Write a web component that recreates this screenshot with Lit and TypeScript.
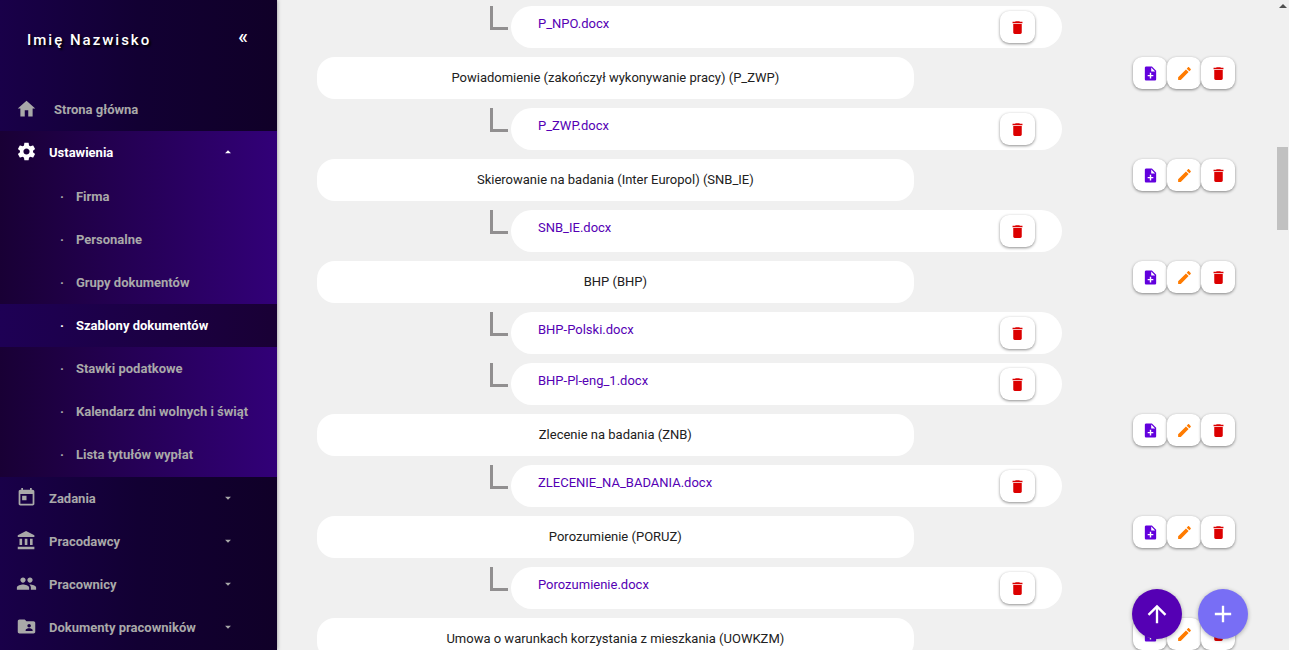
import { LitElement, html, css, svg } from "lit";
import { customElement } from "lit/decorators.js";
import { classMap } from "lit/directives/class-map.js";

const ICONS: Record<string, string> = {
  home: "M10 21v-7h4v7h5v-9h3L12 3 2 12h3v9z",
  settings:
    "M19.43 12.98c.04-.32.07-.64.07-.98s-.03-.66-.07-.98l2.11-1.65c.19-.15.24-.42.12-.64l-2-3.46c-.12-.22-.39-.3-.61-.22l-2.49 1c-.52-.4-1.08-.73-1.69-.98l-.38-2.65C14.46 2.18 14.25 2 14 2h-4c-.25 0-.46.18-.49.42l-.38 2.65c-.61.25-1.17.59-1.69.98l-2.49-1c-.23-.09-.49 0-.61.22l-2 3.46c-.13.22-.07.49.12.64l2.11 1.65c-.04.32-.07.65-.07.98s.03.66.07.98l-2.11 1.65c-.19.15-.24.42-.12.64l2 3.46c.12.22.39.3.61.22l2.49-1c.52.4 1.08.73 1.69.98l.38 2.65c.03.24.24.42.49.42h4c.25 0 .46-.18.49-.42l.38-2.65c.61-.25 1.17-.59 1.69-.98l2.49 1c.23.09.49 0 .61-.22l2-3.46c.12-.22.07-.49-.12-.64l-2.11-1.65zM12 15.5c-1.93 0-3.5-1.57-3.5-3.5s1.57-3.5 3.5-3.5 3.5 1.57 3.5 3.5-1.57 3.5-3.5 3.5z",
  today:
    "M19 3h-1V1h-2v2H8V1H6v2H5c-1.11 0-1.99.9-1.99 2L3 19c0 1.1.89 2 2 2h14c1.1 0 2-.9 2-2V5c0-1.1-.9-2-2-2zm0 16H5V8h14v11zM7 10h5v5H7z",
  bank: "M4 10v7h3v-7H4zm6 0v7h3v-7h-3zM2 22h19v-3H2v3zm14-12v7h3v-7h-3zm-4.5-9L2 6v2h19V6l-9.5-5z",
  people:
    "M16 11c1.66 0 2.99-1.34 2.99-3S17.66 5 16 5c-1.66 0-3 1.34-3 3s1.34 3 3 3zm-8 0c1.66 0 2.99-1.34 2.99-3S9.66 5 8 5C6.34 5 5 6.34 5 8s1.34 3 3 3zm0 2c-2.33 0-7 1.17-7 3.5V19h14v-2.5c0-2.33-4.67-3.5-7-3.5zm8 0c-.29 0-.62.02-.97.05 1.16.84 1.97 1.97 1.97 3.45V19h6v-2.5c0-2.33-4.67-3.5-7-3.5z",
  folder:
    "M20 6h-8l-2-2H4c-1.1 0-1.99.9-1.99 2L2 18c0 1.1.9 2 2 2h16c1.1 0 2-.9 2-2V8c0-1.1-.9-2-2-2zm-5 3c1.1 0 2 .9 2 2s-.9 2-2 2-2-.9-2-2 .9-2 2-2zm4 8h-8v-1c0-1.33 2.67-2 4-2s4 .67 4 2v1z",
  trash: "M6 19c0 1.1.9 2 2 2h8c1.1 0 2-.9 2-2V7H6v12zM19 4h-3.5l-1-1h-5l-1 1H5v2h14V4z",
  edit: "M3 17.25V21h3.75L17.81 9.94l-3.75-3.75L3 17.25zM20.71 7.04c.39-.39.39-1.02 0-1.41l-2.34-2.34c-.39-.39-1.02-.39-1.41 0l-1.83 1.83 3.75 3.75 1.83-1.83z",
  addFile:
    "M14 2H6c-1.1 0-1.99.9-1.99 2L4 20c0 1.1.89 2 1.99 2H18c1.1 0 2-.9 2-2V8l-6-6zm2 14h-3v3h-2v-3H8v-2h3v-3h2v3h3v2zm-3-7V3.5L18.5 9H13z",
  arrowUp: "M4 12l1.41 1.41L11 7.83V20h2V7.83l5.58 5.59L20 12l-8-8-8 8z",
  plus: "M19 13h-6v6h-2v-6H5v-2h6V5h2v6h6z",
  caretDown: "M7 10l5 5 5-5z",
  caretUp: "M7 14l5-5 5 5z",
};

const icon = (name: string) =>
  html`<svg class="icon" viewBox="0 0 24 24" aria-hidden="true">${svg`<path d=${ICONS[name]} />`}</svg>`;

const SETTINGS = [
  "Firma",
  "Personalne",
  "Grupy dokumentów",
  "Szablony dokumentów",
  "Stawki podatkowe",
  "Kalendarz dni wolnych i świąt",
  "Lista tytułów wypłat",
];
const ACTIVE = "Szablony dokumentów";

const SECTIONS = [
  { label: "Zadania", icon: "today" },
  { label: "Pracodawcy", icon: "bank" },
  { label: "Pracownicy", icon: "people" },
  { label: "Dokumenty pracowników", icon: "folder" },
];

interface Group {
  title?: string;
  files: string[];
}

const GROUPS: Group[] = [
  { files: ["P_NPO.docx"] },
  { title: "Powiadomienie (zakończył wykonywanie pracy) (P_ZWP)", files: ["P_ZWP.docx"] },
  { title: "Skierowanie na badania (Inter Europol) (SNB_IE)", files: ["SNB_IE.docx"] },
  { title: "BHP (BHP)", files: ["BHP-Polski.docx", "BHP-Pl-eng_1.docx"] },
  { title: "Zlecenie na badania (ZNB)", files: ["ZLECENIE_NA_BADANIA.docx"] },
  { title: "Porozumienie (PORUZ)", files: ["Porozumienie.docx"] },
  { title: "Umowa o warunkach korzystania z mieszkania (UOWKZM)", files: [] },
];

@customElement("side-menu")
class SideMenu extends LitElement {
  static styles = css`
    :host {
      display: block;
      color: #a9a9a9;
      background: linear-gradient(90deg, #190049, #120033 50%, #100028);
      box-shadow: 0 0 4px rgba(0, 0, 0, 0.4);
      font-size: 13px;
      font-weight: 700;
      line-height: 20px;
      z-index: 1;
    }
    .head {
      display: flex;
      align-items: flex-start;
      justify-content: space-between;
      height: 58px;
      padding: 30px 29px 0 27px;
      color: #fff;
    }
    .name {
      font-size: 15px;
      font-weight: 500;
      letter-spacing: 2px;
      text-shadow: 2px 2px 2px #000;
    }
    .collapse {
      padding: 0;
      border: 0;
      background: none;
      color: inherit;
      font: 500 20px/12px Roboto, sans-serif;
    }
    ul {
      list-style: none;
      margin: 0;
      padding: 0;
    }
    .item {
      display: flex;
      align-items: center;
      box-sizing: border-box;
      width: 100%;
      height: 43px;
      padding: 0 42px 0 16px;
      border: 0;
      background: none;
      color: inherit;
      font: inherit;
      text-align: left;
      text-decoration: none;
      white-space: nowrap;
    }
    .icon {
      width: 21px;
      height: 21px;
      margin-bottom: 2px;
      fill: currentColor;
    }
    .label {
      flex: 1;
      margin-left: 12px;
    }
    .home .label {
      margin-left: 17px;
    }
    .item .caret {
      display: flex;
    }
    .caret .icon {
      width: 14px;
      height: 14px;
    }
    .open {
      background: linear-gradient(90deg, #190035, #320078);
    }
    .open > .item {
      color: #fff;
    }
    .sub {
      padding: 1px 0;
    }
    .sub .item {
      padding: 0 16px 0 60px;
    }
    .sub .active {
      color: #fff;
      background: linear-gradient(90deg, #1e0055, #190035);
    }
  `;

  render() {
    return html`
      <div class="head">
        <span class="name">Imię Nazwisko</span>
        <button class="collapse" aria-label="Zwiń menu">«</button>
      </div>
      <ul>
        <li>
          <a class="item home" href="#">${icon("home")}<span class="label">Strona główna</span></a>
        </li>
        <li class="open">
          <button class="item" aria-expanded="true">
            ${icon("settings")}<span class="label">Ustawienia</span>
            <span class="caret">${icon("caretUp")}</span>
          </button>
          <ul class="sub">
            ${SETTINGS.map(
              (s) => html`<li>
                <a class=${classMap({ item: true, active: s === ACTIVE })} href="#"
                  ><span>·</span><span class="label">${s}</span></a
                >
              </li>`
            )}
          </ul>
        </li>
        ${SECTIONS.map(
          (s) => html`<li>
            <button class="item" aria-expanded="false">
              ${icon(s.icon)}<span class="label">${s.label}</span>
              <span class="caret">${icon("caretDown")}</span>
            </button>
          </li>`
        )}
      </ul>
    `;
  }
}

@customElement("template-list")
class TemplateList extends LitElement {
  static styles = css`
    :host {
      display: flex;
      flex-direction: column;
      gap: 9px;
      padding: 6px 42px 0 40px;
      font-size: 13px;
      line-height: 20px;
      color: #212121;
    }
    .row {
      display: flex;
      flex: none;
      justify-content: space-between;
      align-items: flex-start;
    }
    .title,
    .file {
      box-sizing: border-box;
      min-height: 42px;
      background: #fff;
      border-radius: 21px;
    }
    .title {
      width: 65%;
      padding: 11px 16px;
      border-radius: 18px;
      text-align: center;
    }
    .nested {
      justify-content: flex-start;
      padding-left: 173px;
    }
    .elbow {
      flex: none;
      box-sizing: border-box;
      width: 18px;
      height: 24px;
      margin-right: 3px;
      border: solid #918f90;
      border-width: 0 0 3px 3px;
    }
    .file {
      display: flex;
      justify-content: space-between;
      width: 74%;
      padding: 5px 27px;
    }
    .link {
      margin-top: 3px;
      height: 20px;
      color: #5500b4;
      text-decoration: none;
    }
    .actions {
      display: flex;
    }
    .btn {
      display: flex;
      align-items: center;
      justify-content: center;
      width: 35px;
      height: 32px;
      padding: 0;
      border: 0;
      border-radius: 9px;
      background: #fff;
      box-shadow: 0 1px 3px rgba(0, 0, 0, 0.45);
    }
    .actions .btn {
      width: 34px;
    }
    .icon {
      width: 17px;
      height: 17px;
      fill: currentColor;
    }
    .add {
      color: #6200dd;
    }
    .edit {
      color: #ff7b00;
    }
    .delete {
      color: #dc0000;
    }
  `;

  render() {
    return GROUPS.map(
      (g) => html`
        ${g.title
          ? html`<div class="row">
              <div class="title">${g.title}</div>
              <div class="actions">
                <button class="btn add" aria-label="Dodaj plik">${icon("addFile")}</button>
                <button class="btn edit" aria-label="Edytuj">${icon("edit")}</button>
                <button class="btn delete" aria-label="Usuń">${icon("trash")}</button>
              </div>
            </div>`
          : ""}
        ${g.files.map(
          (f) => html`<div class="row nested">
            <span class="elbow"></span>
            <div class="file">
              <a class="link" href="#">${f}</a>
              <button class="btn delete" aria-label="Usuń">${icon("trash")}</button>
            </div>
          </div>`
        )}
      `
    );
  }
}

@customElement("app-root")
class AppRoot extends LitElement {
  static styles = css`
    :host {
      display: grid;
      grid-template-columns: 277px minmax(0, 1fr) 12px;
      height: 100vh;
      overflow: hidden;
      background: #f0f0f0;
      font-family: Roboto, "Noto Sans", sans-serif;
    }
    .list {
      min-height: 0;
      overflow: hidden;
    }
    .track {
      display: flex;
      flex-direction: column;
      align-items: center;
      padding-right: 1px;
    }
    .up {
      width: 0;
      margin: 4px 0 139px;
      border: solid transparent;
      border-width: 0 4px 4px;
      border-bottom-color: #505050;
    }
    .thumb {
      width: 11px;
      height: 83px;
      background: #c1c1c1;
    }
    .fabs {
      position: fixed;
      right: 41px;
      bottom: 11px;
      display: flex;
      gap: 16px;
      z-index: 2;
    }
    .fab {
      display: flex;
      align-items: center;
      justify-content: center;
      width: 50px;
      height: 50px;
      padding: 0;
      border: 0;
      border-radius: 50%;
      background: #5500b4;
      color: #fff;
      box-shadow: 0 1px 4px rgba(0, 0, 0, 0.3);
    }
    .new {
      background: #786ef5;
    }
    .fab .icon {
      width: 28px;
      height: 28px;
      fill: currentColor;
    }
  `;

  render() {
    return html`
      <side-menu></side-menu>
      <template-list class="list"></template-list>
      <div class="track"><span class="up"></span><span class="thumb"></span></div>
      <div class="fabs">
        <button class="fab" aria-label="Do góry">${icon("arrowUp")}</button>
        <button class="fab new" aria-label="Dodaj">${icon("plus")}</button>
      </div>
    `;
  }
}
